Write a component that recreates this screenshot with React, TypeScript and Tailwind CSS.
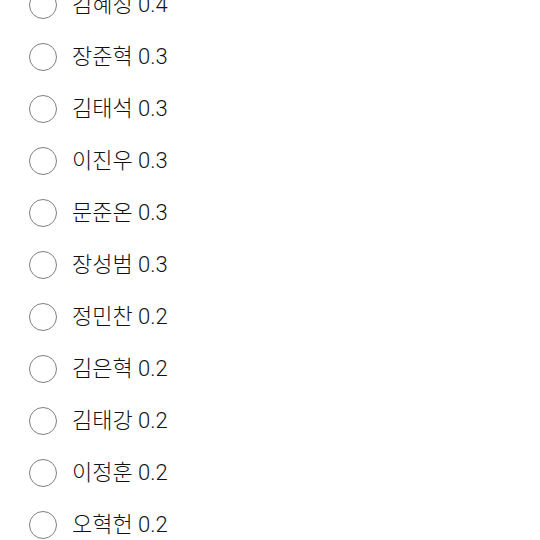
const items = [
  '김혜정 0.4',
  '장준혁 0.3',
  '김태석 0.3',
  '이진우 0.3',
  '문준온 0.3',
  '장성범 0.3',
  '정민찬 0.2',
  '김은혁 0.2',
  '김태강 0.2',
  '이정훈 0.2',
  '오혁헌 0.2',
];

export default function App() {
  return (
    <div className="w-[540px] h-[540px] overflow-hidden bg-white">
      <ul className="mt-[-21px] font-['Roboto','Noto_Sans_CJK_KR',sans-serif] font-light text-[#111]">
        {items.map((label) => (
          <li key={label} className="flex h-[52px] items-center gap-[15px] pl-[29px]">
            <span className="h-[28px] w-[28px] shrink-0 rounded-full border-[1.5px] border-[#808080]" />
            <span className="text-[22px] leading-none">{label}</span>
          </li>
        ))}
      </ul>
    </div>
  );
}
